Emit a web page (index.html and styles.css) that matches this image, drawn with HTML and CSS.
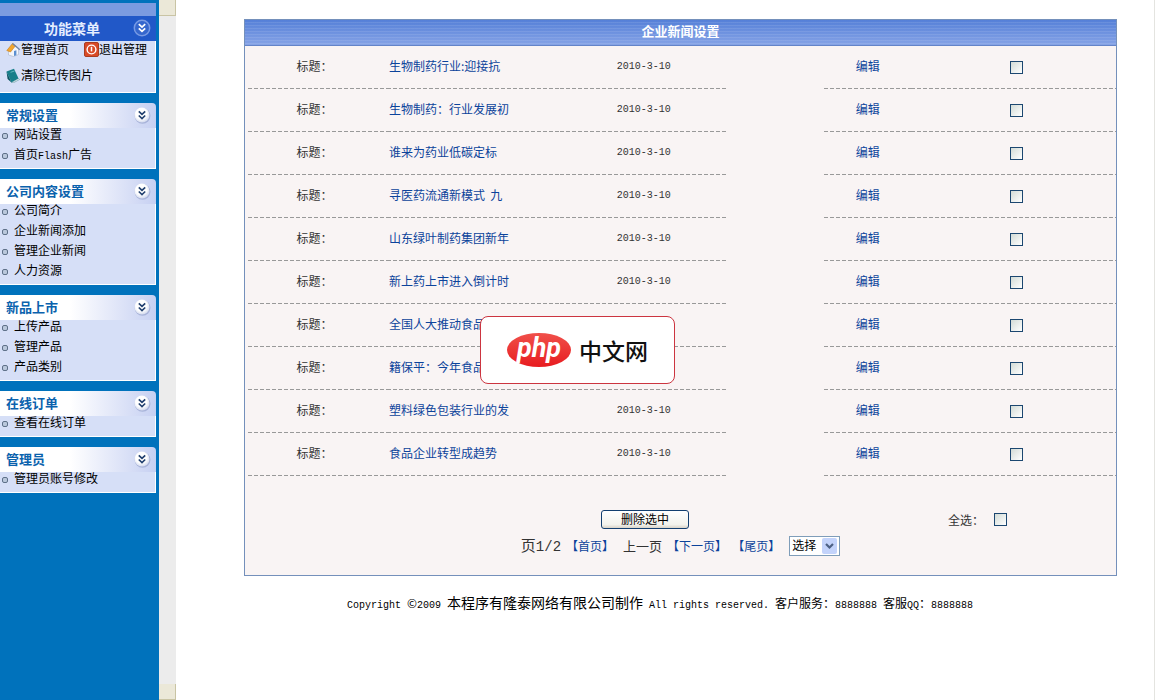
FILE: index.html
```html
<!DOCTYPE html>
<html lang="zh-CN">
<head>
<meta charset="utf-8">
<title>企业新闻设置</title>
<link rel="stylesheet" href="styles.css">
</head>
<body>
<svg class="defs" aria-hidden="true">
  <defs>
    <radialGradient id="knob" cx="45%" cy="40%" r="60%"><stop offset="0.6" stop-color="#fff"/><stop offset="1" stop-color="#d3daee"/></radialGradient>
    <symbol id="chevrons" viewBox="0 0 18 18">
      <circle cx="9.5" cy="9.8" r="7.9" fill="#8f9dc8" opacity="0.6"/>
      <circle cx="9" cy="9" r="7.5" fill="url(#knob)"/>
      <path d="M5.8 5.3l3.2 3 3.2-3M5.8 9.5l3.2 3 3.2-3" fill="none" stroke="#22406f" stroke-width="1.7"/>
    </symbol>
  </defs>
</svg>
<aside class="sidebar">
  <nav class="menu">
    <section class="group">
      <div class="strip"></div>
      <h1 class="menu-title"><span>功能菜单</span>
        <svg class="toggle" viewBox="0 0 18 18"><circle cx="9" cy="9" r="7.7" fill="#3566cd" stroke="#789ae4" stroke-width="1.5"/><path d="M5.8 5.1l3.2 3 3.2-3M5.8 9.3l3.2 3 3.2-3" fill="none" stroke="#fff" stroke-width="1.7"/></svg>
      </h1>
      <div class="quick">
        <a href="#"><svg class="icon" viewBox="0 0 15 15"><path d="M2.5 7v6l5 1.5 5-2V6L8 3z" fill="#f4f6fb" stroke="#a9b3c6" stroke-width=".6"/><path d="M.8 8.5L6.5 1.5l3 2.3L4.5 10z" fill="#f2a630" stroke="#c97d18" stroke-width=".6"/><path d="M6.5 1.5l7.3 6.2" stroke="#6f84a8" stroke-width="1.3"/><path d="M8 9l2.4-.7v5L8 14z" fill="#5c8fd0"/></svg>管理首页</a>
        <a href="#"><svg class="icon" viewBox="0 0 15 15"><rect x=".5" y=".5" width="14" height="14" rx="1.5" fill="#d94a26" stroke="#a93c20"/><circle cx="7.5" cy="7.5" r="4.4" fill="none" stroke="#fff" stroke-width="1.4"/><path d="M7.5 4.8v4.6" stroke="#fff" stroke-width="1.5"/></svg>退出管理</a>
        <a href="#"><svg class="icon" viewBox="0 0 15 15"><path d="M.5 3.5L8 .8l4.5 9.7-7 4z" fill="#177f8a"/><path d="M.5 3.5l5 11L1.6 11z" fill="#0b5562"/><path d="M5.5 14.5l7-4 1 1-6.5 3.5z" fill="#e9f3f5" stroke="#4b8690" stroke-width=".5"/><path d="M4.5 4.3l4-1.3" stroke="#62b7bd"/></svg>清除已传图片</a>
      </div>
    </section>
    <section class="group">
      <h2 class="group-title"><span>常规设置</span><svg class="toggle"><use href="#chevrons"/></svg></h2>
      <ul class="links"><li><a href="#">网站设置</a></li><li><a href="#">首页<span class="latin">Flash</span>广告</a></li></ul>
    </section>
    <section class="group">
      <h2 class="group-title"><span>公司内容设置</span><svg class="toggle"><use href="#chevrons"/></svg></h2>
      <ul class="links"><li><a href="#">公司简介</a></li><li><a href="#">企业新闻添加</a></li><li><a href="#">管理企业新闻</a></li><li><a href="#">人力资源</a></li></ul>
    </section>
    <section class="group">
      <h2 class="group-title"><span>新品上市</span><svg class="toggle"><use href="#chevrons"/></svg></h2>
      <ul class="links"><li><a href="#">上传产品</a></li><li><a href="#">管理产品</a></li><li><a href="#">产品类别</a></li></ul>
    </section>
    <section class="group">
      <h2 class="group-title"><span>在线订单</span><svg class="toggle"><use href="#chevrons"/></svg></h2>
      <ul class="links"><li><a href="#">查看在线订单</a></li></ul>
    </section>
    <section class="group">
      <h2 class="group-title"><span>管理员</span><svg class="toggle"><use href="#chevrons"/></svg></h2>
      <ul class="links"><li><a href="#">管理员账号修改</a></li></ul>
    </section>
  </nav>
  <div class="track"><span class="track-end"></span><span class="track-end"></span></div>
</aside>
<main class="main">
  <form class="panel">
    <h2 class="panel-title">企业新闻设置</h2>
    <div class="rows">
    <table class="news">
      <colgroup><col class="c-label"><col class="c-title"><col class="c-date"><col class="c-blank"><col class="c-edit"><col class="c-check"></colgroup>
      <tbody>
      <tr><td>标题：</td><td><a href="#">生物制药行业:迎接抗</a></td><td><span class="latin">2010-3-10</span></td><td></td><td><a href="#">编辑</a></td><td><input type="checkbox" aria-label="生物制药行业:迎接抗"></td></tr>
      <tr><td>标题：</td><td><a href="#">生物制药：行业发展初</a></td><td><span class="latin">2010-3-10</span></td><td></td><td><a href="#">编辑</a></td><td><input type="checkbox" aria-label="生物制药：行业发展初"></td></tr>
      <tr><td>标题：</td><td><a href="#">谁来为药业低碳定标</a></td><td><span class="latin">2010-3-10</span></td><td></td><td><a href="#">编辑</a></td><td><input type="checkbox" aria-label="谁来为药业低碳定标"></td></tr>
      <tr><td>标题：</td><td><a href="#">寻医药流通新模式&nbsp; 九</a></td><td><span class="latin">2010-3-10</span></td><td></td><td><a href="#">编辑</a></td><td><input type="checkbox" aria-label="寻医药流通新模式 九"></td></tr>
      <tr><td>标题：</td><td><a href="#">山东绿叶制药集团新年</a></td><td><span class="latin">2010-3-10</span></td><td></td><td><a href="#">编辑</a></td><td><input type="checkbox" aria-label="山东绿叶制药集团新年"></td></tr>
      <tr><td>标题：</td><td><a href="#">新上药上市进入倒计时</a></td><td><span class="latin">2010-3-10</span></td><td></td><td><a href="#">编辑</a></td><td><input type="checkbox" aria-label="新上药上市进入倒计时"></td></tr>
      <tr><td>标题：</td><td><a href="#">全国人大推动食品</a></td><td></td><td></td><td><a href="#">编辑</a></td><td><input type="checkbox" aria-label="全国人大推动食品"></td></tr>
      <tr><td>标题：</td><td><a href="#">籍保平：今年食品</a></td><td></td><td></td><td><a href="#">编辑</a></td><td><input type="checkbox" aria-label="籍保平：今年食品"></td></tr>
      <tr><td>标题：</td><td><a href="#">塑料绿色包装行业的发</a></td><td><span class="latin">2010-3-10</span></td><td></td><td><a href="#">编辑</a></td><td><input type="checkbox" aria-label="塑料绿色包装行业的发"></td></tr>
      <tr><td>标题：</td><td><a href="#">食品企业转型成趋势</a></td><td><span class="latin">2010-3-10</span></td><td></td><td><a href="#">编辑</a></td><td><input type="checkbox" aria-label="食品企业转型成趋势"></td></tr>
      </tbody>
    </table>
    </div>
    <div class="actions">
      <button class="delete" type="button">删除选中</button>
      <div class="all"><label for="all">全选：</label><input type="checkbox" id="all"></div>
    </div>
    <div class="pager">
      <span class="count">页<span class="digits">1/2</span></span>
      <a href="#">【首页】</a>
      <span class="prev">上一页</span>
      <a href="#">【下一页】</a>
      <a href="#">【尾页】</a>
      <span class="picker"><select aria-label="选择页"><option>选择</option></select>
        <svg class="drop" viewBox="0 0 15 16"><rect width="15" height="16" rx="2" fill="#c3d3fb"/><path d="M4 6l3.5 3.5L11 6" fill="none" stroke="#4d6185" stroke-width="2.2"/></svg></span>
    </div>
    <div class="badge">
      <span class="oval">php</span><span class="brand">中文网</span>
    </div>
  </form>
  <footer class="copyright"><span class="latin">Copyright </span>©<span class="latin">2009 </span><span class="company">本程序有隆泰网络有限公司制作</span><span class="latin"> All rights reserved. </span>客户服务：<span class="latin">8888888 </span>客服<span class="latin">QQ</span>：<span class="latin">8888888</span></footer>
</main>
</body>
</html>
```

FILE: styles.css
```css
*, *::before { box-sizing: border-box; }
body {
  margin: 0;
  min-height: 100vh;
  display: flex;
  background: #fff;
  color: #000;
  font: 12px/16px "Noto Sans CJK SC", sans-serif;
}
h1, h2, ul { margin: 0; padding: 0; }
a { color: inherit; text-decoration: none; }
.defs { position: absolute; width: 0; height: 0; }
.latin { font-family: "Liberation Mono", monospace; font-size: 10px; white-space: pre; }

.sidebar { flex: none; display: flex; background: #0072bc; }
.menu { width: 159px; padding: 3px 3px 0 0; display: flex; flex-direction: column; gap: 10px; }
.strip { height: 13px; background: #7b9be0; }
.menu-title, .group-title {
  height: 25px;
  display: flex;
  align-items: center;
  justify-content: space-between;
  font-size: 13px;
  line-height: 24px;
  padding: 0 5px 2px 6px;
}
.menu-title { background: #2158c8; color: #e4edff; font-size: 14px; padding-left: 44px; }
.group-title {
  color: #0a62ad;
  background: linear-gradient(to right, #fff 45%, #c6d0f2);
  border-top-right-radius: 4px;
}
.toggle { width: 18px; height: 18px; }
.quick, .links { background: #d6dff7; border: solid #fff; border-width: 0 1px 1px 0; }
.quick { height: 52px; padding-left: 6px; display: flex; flex-wrap: wrap; align-content: flex-start; column-gap: 15px; row-gap: 10px; }
.quick a { display: flex; align-items: center; }
.icon { width: 15px; height: 15px; }
.links { list-style: none; }
.links li { height: 20px; line-height: 12px; padding-left: 2px; }
.links a { display: flex; align-items: baseline; white-space: nowrap; }
.links a::before {
  content: "";
  width: 6px;
  height: 6px;
  margin-right: 6px;
  border: 1px solid #5f7189;
  border-radius: 2px;
  background: #bac8dc;
}
.track { width: 17px; background: #ececec; display: flex; flex-direction: column; justify-content: space-between; }
.track-end { height: 16px; background: #ebe8d8; border: solid #c9c4a4; border-width: 0 1px 1px 0; }

.main { flex: 1; min-width: 0; border-right: 1px solid #e4e4e0; margin-right: 1px; }
.panel { position: relative; margin: 19px 37px 0 68px; border: 1px solid #7490bb; background: #f9f4f4; color: #333; padding-bottom: 19px; }
.panel-title {
  height: 26px;
  line-height: 22px;
  text-align: center;
  font-size: 13px;
  color: #fff;
  background: repeating-linear-gradient(transparent 0 2px, #ffffff18 2px 3px), linear-gradient(#5580d8, #86a3e6);
  border-bottom: 1px solid #6484c8;
}
.rows { padding-left: 3px; }
.news { width: 100%; table-layout: fixed; border-collapse: separate; border-spacing: 0; }
.c-label { width: 16%; }
.c-title { width: 20%; }
.c-date { width: 19.2%; }
.c-blank { width: 11.2%; }
.c-edit { width: 10%; }
td {
  height: 43px;
  padding: 0 0 4px;
  text-align: center;
  white-space: nowrap;
  background: repeating-linear-gradient(to right, #999 0 4px, transparent 4px 6px) left bottom / 100% 1px no-repeat;
}
td:first-child { padding-right: 6px; }
td:nth-child(2) { text-align: left; padding-left: 2px; }
td:nth-child(4) { background: none; }
td:last-child { padding-left: 5px; }
td a, .pager a { color: #0c439b; }
input[type="checkbox"] {
  appearance: none;
  display: block;
  width: 13px;
  height: 13px;
  margin: 0;
  border: 1px solid #1c4770;
  background: linear-gradient(135deg, #d3dbd6, #fff);
}
td input[type="checkbox"] { margin: 3px auto 0; }

.actions {
  margin-top: 34px;
  padding-right: 109px;
  display: grid;
  grid-template-columns: 41% 1fr auto;
  grid-template-columns: 356px 1fr auto;
  align-items: center;
}
.delete {
  grid-column: 2;
  justify-self: start;
  width: 88px;
  height: 19px;
  padding: 0 0 2px;
  font: inherit;
  line-height: 14px;
  border: 1px solid #123f70;
  border-radius: 3px;
  background: linear-gradient(#fff, #f2f2ec 80%, #d8d3c8);
}
.all { display: flex; align-items: center; gap: 10px; }
.pager { margin-top: 7px; display: flex; align-items: center; justify-content: center; gap: 5px; white-space: nowrap; height: 20px; }
.count { font-size: 15px; }
.digits { font-family: "Liberation Mono", monospace; font-size: 14px; }
.prev { font-size: 13px; margin-left: 4px; }
.picker { position: relative; margin-left: 4px; }
.picker select {
  appearance: none;
  display: block;
  width: 51px;
  height: 20px;
  padding: 0 0 3px 2px;
  border: 1px solid #7f9db9;
  border-radius: 0;
  background: #fff;
  color: #000;
  font: inherit;
}
.drop { position: absolute; right: 3px; top: 2px; width: 15px; height: 16px; pointer-events: none; }
.badge {
  position: absolute;
  left: 235px;
  top: 296px;
  width: 195px;
  height: 68px;
  display: flex;
  align-items: center;
  justify-content: center;
  gap: 8px;
  background: #fff;
  border: 1px solid #cc3540;
  border-radius: 8px;
}
.oval {
  width: 64px;
  height: 34px;
  border-radius: 50%;
  background: linear-gradient(#f0504a, #e81c20);
  color: #fff;
  text-align: center;
  font: italic bold 27px/30px Roboto, sans-serif;
}
.brand { color: #111; font-size: 23px; font-weight: 500; line-height: 34px; }
.copyright { padding: 16px 10px 0 0; text-align: center; line-height: 20px; white-space: nowrap; }
.company { font-size: 14px; }
```
